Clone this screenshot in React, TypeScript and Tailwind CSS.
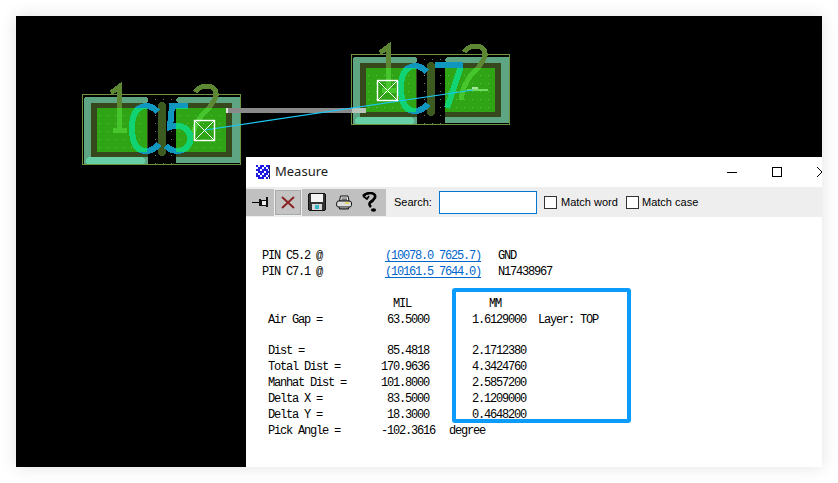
import React from 'react';

const sans = { fontFamily: '"Liberation Sans", Arial, sans-serif' };

type Silk = { d: string; w: number };

const C_PATH = 'M158,112 Q151,105 145,106 Q132,108 132,128 Q132,151 146,151 Q153,151 159,144';
const ONE_PATH = 'M111,93 L119,87 L119,130 M113,130 L127,130';
const TWO_PATH = 'M195,92 Q200,86 207,86 Q217,87 216,96 Q213,105 203,114 Q194,124 192,140';

function Footprint({ id, dx, dy, glyph }: { id: string; dx: number; dy: number; glyph: string }) {
  const silk: Silk[] = [
    { d: ONE_PATH, w: 5 },
    { d: TWO_PATH, w: 5 },
  ];
  return (
    <g transform={`translate(${dx} ${dy})`}>
      <defs>
        <clipPath id={`${id}-copper`}>
          <rect x="97" y="108" width="50" height="44" />
          <rect x="176" y="108" width="50" height="44" />
        </clipPath>
      </defs>
      <rect x="82.5" y="94.5" width="158" height="70" fill="#000" stroke="#6b9440" />
      <rect x="148" y="95" width="28" height="69" fill="url(#dots)" />
      {/* pad copper and mask */}
      <path d="M84,99 Q84,97 86,97 H146 L148,99 V101 L146,103 H91 V157 H148 V163 H84 Z" fill="#5ea583" />
      <path d="M178,97 H240 V163 H176 V157 H232 V103 H178 L176,101 V99 Z" fill="#5ea583" />
      <rect x="91" y="103" width="57" height="54" fill="#36481c" />
      <rect x="176" y="103" width="56" height="54" fill="#36481c" />
      <rect x="97" y="108" width="50" height="44" fill="#2fa516" />
      <rect x="176" y="108" width="50" height="44" fill="#2fa516" />
      <rect x="97" y="108" width="50" height="44" fill="url(#dotsGreen)" />
      <rect x="176" y="108" width="50" height="44" fill="url(#dotsGreen)" />
      <rect x="84" y="157" width="64" height="7" fill="#5ea583" />
      <rect x="86" y="157" width="59" height="7" rx="3.5" fill="#66cfa6" />
      <rect x="177" y="157" width="63" height="6" rx="3" fill="#5ea583" />

      {silk.map((s) => (
        <path key={s.d} d={s.d} fill="none" stroke="#5d8732" strokeWidth={s.w} />
      ))}
      <g clipPath={`url(#${id}-copper)`}>
        {silk.map((s) => (
          <path key={s.d} d={s.d} fill="none" stroke="#47c52c" strokeWidth={s.w} />
        ))}
      </g>
      <line x1="162" y1="106" x2="162" y2="152" stroke="#3d5a20" strokeWidth="8" strokeLinecap="round" />
      <path d={C_PATH} fill="none" stroke="#0f97c0" strokeWidth="6" />
      <path d={glyph} fill="none" stroke="#0f97c0" strokeWidth="6" />
      <g clipPath={`url(#${id}-copper)`}>
        <path d={C_PATH} fill="none" stroke="#12d374" strokeWidth="6" />
        <path d={glyph} fill="none" stroke="#12d374" strokeWidth="6" />
      </g>
    </g>
  );
}

function PcbCanvas() {
  return (
    <svg width="806" height="451" viewBox="16 16 806 451" className="block" shapeRendering="crispEdges">
      <defs>
        <pattern id="dots" width="8" height="8" patternUnits="userSpaceOnUse">
          <rect x="3" y="3" width="1" height="1" fill="#6f8068" />
        </pattern>
        <pattern id="dotsGreen" width="8" height="8" patternUnits="userSpaceOnUse">
          <rect x="3" y="3" width="1" height="1" fill="#62bd52" />
        </pattern>
      </defs>
      <rect x="16" y="16" width="806" height="451" fill="#000" />
      <Footprint
        id="c5"
        dx={0}
        dy={0}
        glyph="M188,106 L172,106 L170,127 Q178,124 185,128 Q192,134 190,142 Q186,151 178,151 Q171,151 166,146"
      />
      <Footprint id="c7" dx={269} dy={-40} glyph="M166,105 L191,105 L191,109 L178,148" />

      {/* unrouted air gap */}
      <rect x="226" y="108" width="140" height="5" fill="#8a8a8a" />
      <rect x="226" y="108" width="2" height="5" fill="#e2e2e2" />
      <rect x="352" y="108" width="14" height="5" fill="#b9c4bb" />
      <rect x="467" y="89" width="21" height="2" fill="#6fdc5e" />
      <rect x="472" y="87" width="6" height="2" fill="#a6e59a" />

      <g shapeRendering="auto">
        <line x1="205" y1="130" x2="473" y2="90" stroke="#19c8f5" strokeWidth="1.2" />
        <rect x="194.5" y="120.5" width="20" height="20" fill="none" stroke="#fff" strokeWidth="1.4" />
        <path d="M195,121 L214,140 M214,121 L195,140" stroke="#fff" strokeWidth="1" />
        <rect x="377.5" y="80.5" width="20" height="20" fill="none" stroke="#fff" strokeWidth="1.4" />
        <path d="M378,81 L397,100 M397,81 L378,100" stroke="#fff" strokeWidth="1" />
      </g>
    </svg>
  );
}

function AppIcon() {
  const cells = [
    '1011011', '0110101', '1101110', '0111011', '1010110', '1101101', '0111010',
  ];
  return (
    <svg width="14" height="14" viewBox="0 0 14 14" shapeRendering="crispEdges" className="shrink-0">
      <rect width="14" height="14" fill="#fff" />
      {cells.map((row, y) =>
        row.split('').map((c, x) =>
          c === '1' ? <rect key={`${x}-${y}`} x={x * 2} y={y * 2} width="2" height="2" fill="#1a1ae0" /> : null,
        ),
      )}
      <rect x="13" width="1" height="14" fill="#20206a" />
    </svg>
  );
}

function PinIcon() {
  return (
    <svg width="17" height="12" viewBox="0 0 17 12" shapeRendering="crispEdges">
      <rect x="0" y="6" width="7" height="1" fill="#000" />
      <rect x="7" y="3" width="2" height="7" fill="#111" />
      <rect x="9" y="4" width="5" height="5" fill="#eee" stroke="#111" strokeWidth="1" />
      <rect x="14" y="1" width="2" height="10" fill="#111" />
    </svg>
  );
}

function SaveIcon() {
  return (
    <svg width="18" height="18" viewBox="0 0 18 18" shapeRendering="crispEdges">
      <rect x="0.5" y="0.5" width="17" height="17" rx="2" fill="#333" stroke="#111" />
      <rect x="3" y="1" width="12" height="8" fill="#f4f4f4" />
      <rect x="4" y="11" width="10" height="6" fill="#d8d8d8" />
      <rect x="7" y="12" width="4" height="4" fill="#38b6c8" />
    </svg>
  );
}

function PrintIcon() {
  return (
    <svg width="16" height="15" viewBox="0 0 16 15">
      <path d="M4.5,1 H12 L13,6 H3.5 Z" fill="#eee" stroke="#111" />
      <path d="M5.5,3 H11 M5.5,4.6 H11" stroke="#333" strokeWidth="0.8" />
      <path d="M1,7 Q1,6 3,6 H13 Q15.5,6 15.5,8 V10.5 Q15.5,12 13,12 H3 Q0.5,12 0.5,10 Z" fill="#ddd" stroke="#111" />
      <rect x="9" y="7.4" width="4" height="1.4" fill="#e6d53a" />
      <path d="M3,12 L3.6,14 H12.4 L13,12" fill="#888" stroke="#111" />
    </svg>
  );
}

function HelpIcon() {
  return (
    <svg width="15" height="20" viewBox="0 0 15 20">
      <path d="M1,4 Q4,0.8 9,1 Q14,2 13,5.5 Q11,9 8,10.5 Q6.5,12.5 9,15" fill="none" stroke="#000" strokeWidth="2.6" />
      <path d="M1,4 L5,7 L7,4" fill="none" stroke="#000" strokeWidth="1.6" />
      <ellipse cx="11.5" cy="18" rx="2.6" ry="1.8" fill="#000" />
    </svg>
  );
}

function Toolbar() {
  return (
    <div className="flex h-[30px] items-center whitespace-nowrap bg-[#eeeeee] text-[11px] text-black" style={sans}>
      <div className="flex h-[27px] w-[28px] items-center justify-center bg-[#c0c0c0]">
        <PinIcon />
      </div>
      <div className="ml-px flex h-[25px] w-[26px] items-center justify-center border border-[#a9a9a9] bg-[#c4c4c4]">
        <svg width="14" height="13" viewBox="0 0 14 13">
          <path d="M1,1 L13,12 M13,1 L1,12" stroke="#8a2222" strokeWidth="2" />
        </svg>
      </div>
      <div className="ml-px flex h-[27px] w-[84px] items-center gap-[10px] bg-[#c0c0c0] pl-[6px]">
        <SaveIcon />
        <PrintIcon />
        <HelpIcon />
      </div>
      <span className="ml-2 w-[37px]">Search:</span>
      <div className="ml-2 h-[23px] w-[98px] border border-[#0078d7] bg-white" />
      <div className="ml-[7px] h-[13px] w-[13px] border border-[#333333] bg-white" />
      <span className="ml-[4px] w-[65px]">Match word</span>
      <div className="h-[13px] w-[13px] border border-[#333333] bg-white" />
      <span className="ml-[3px]">Match case</span>
    </div>
  );
}

const rows = [
  { label: 'Dist =', mil: ' 85.4818', mm: '2.1712380' },
  { label: 'Total Dist =', mil: '170.9636', mm: '4.3424760' },
  { label: 'Manhat Dist =', mil: '101.8000', mm: '2.5857200' },
  { label: 'Delta X =', mil: ' 83.5000', mm: '2.1209000' },
  { label: 'Delta Y =', mil: ' 18.3000', mm: '0.4648200' },
];

function MetricRow({ label, mil, mm, tail }: { label: string; mil: string; mm?: string; tail?: string }) {
  return (
    <div className="flex h-[16px] items-center whitespace-pre pl-[22px]">
      <span className="w-[113px]">{label}</span>
      <span className="w-[54px]">{mil}</span>
      {mm && <span className="ml-[37px] w-[54px]">{mm}</span>}
      {tail && <span className={mm ? 'ml-3' : 'ml-[14px]'}>{tail}</span>}
    </div>
  );
}

function Report() {
  return (
    <div
      className="whitespace-pre pt-[31px] text-[12px] tracking-[-1.2px] text-black"
      style={{ fontFamily: '"Liberation Mono", "Courier New", monospace' }}
    >
      <div className="flex h-[16px] items-center pl-[16px]">
        <span className="w-[123px]">PIN C5.2 @</span>
        <a className="w-[96px] text-[#0066cc] underline underline-offset-2">(10078.0 7625.7)</a>
        <span className="ml-[17px]">GND</span>
      </div>
      <div className="flex h-[16px] items-center pl-[16px]">
        <span className="w-[123px]">PIN C7.1 @</span>
        <a className="w-[96px] text-[#0066cc] underline underline-offset-2">(10161.5 7644.0)</a>
        <span className="ml-[17px]">N17438967</span>
      </div>

      <div className="mt-[16px] flex h-[16px] items-center pl-[147px]">
        <span className="w-[19px]">MIL</span>
        <span className="ml-[77px]">MM</span>
      </div>
      <MetricRow label="Air Gap =" mil=" 63.5000" mm="1.6129000" tail="Layer: TOP" />

      <div className="mt-[15px]">
        {rows.map((r) => (
          <MetricRow key={r.label} label={r.label} mil={r.mil} mm={r.mm} />
        ))}
        <MetricRow label="Pick Angle =" mil="-102.3616" tail="degree" />
      </div>
    </div>
  );
}

function MeasureWindow() {
  return (
    <div className="absolute bottom-0 left-[230px] top-[141px] w-[576px] overflow-hidden bg-white">
      <div className="flex h-[30px] items-center bg-white pl-[10px] pr-[1px]">
        <AppIcon />
        <span className="ml-[5px] text-[13px] text-[#1a1a1a]" style={{ fontFamily: '"Noto Sans", sans-serif' }}>
          Measure
        </span>
        <div className="ml-auto flex items-center">
          <div className="h-px w-[10px] bg-black" />
          <div className="ml-[35px] h-[10px] w-[10px] border border-black" />
          <svg width="10" height="10" viewBox="0 0 10 10" className="ml-[35px] mr-[-6px]">
            <path d="M0,0 L10,10 M10,0 L0,10" stroke="#000" strokeWidth="1" />
          </svg>
        </div>
      </div>
      <Toolbar />
      <Report />
      {/* highlight drawn over the report */}
      <div className="absolute left-[206px] top-[131px] h-[135px] w-[179px] rounded-[3px] border-4 border-[#0a9bfb]" />
    </div>
  );
}

export default function App() {
  return (
    <div className="h-[483px] w-[838px] overflow-hidden bg-white p-4">
      <div className="relative h-[451px] w-[806px] overflow-hidden bg-black shadow-[0_0_16px_rgba(0,0,0,0.12)]">
        <PcbCanvas />
        <MeasureWindow />
      </div>
    </div>
  );
}
